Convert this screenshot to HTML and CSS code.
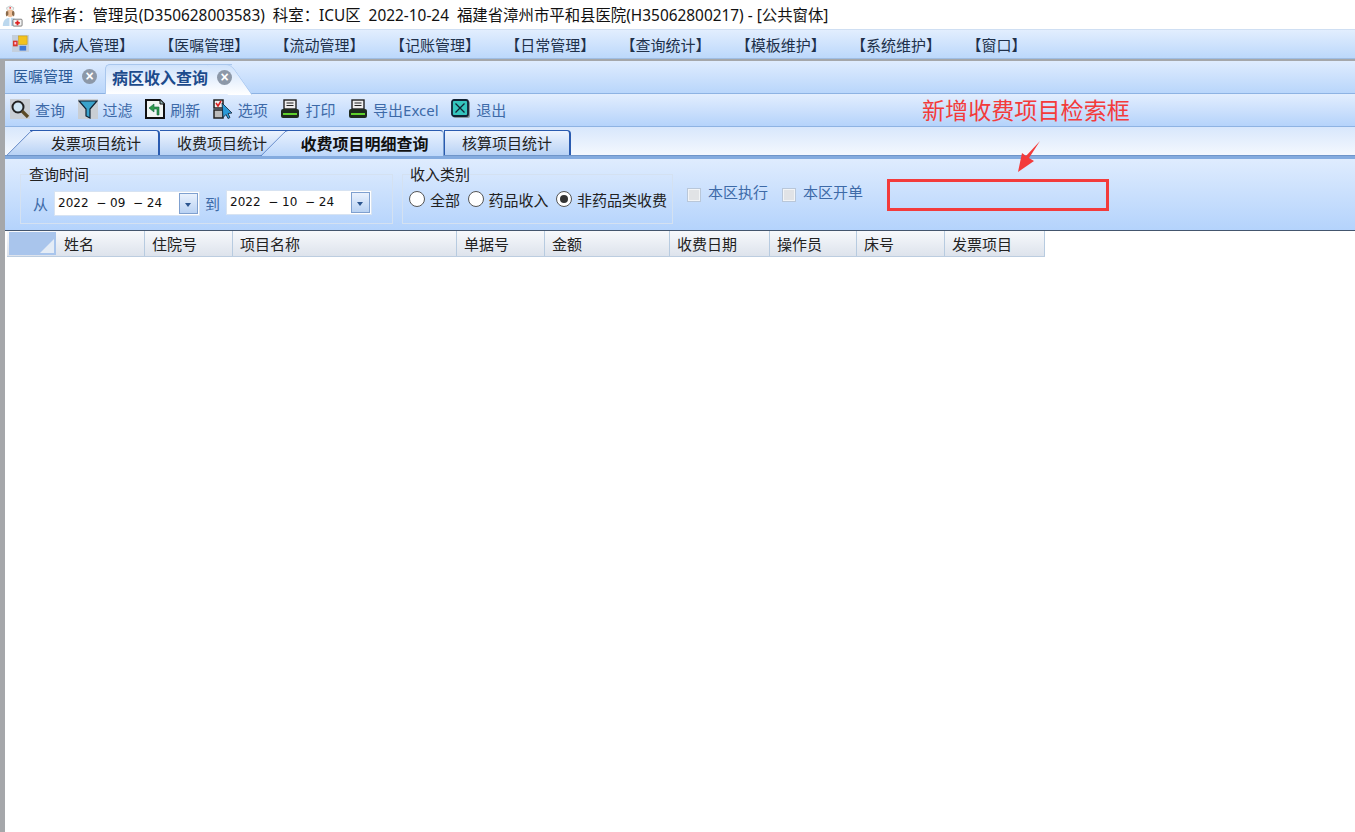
FILE: index.html
```html
<!DOCTYPE html>
<html lang="zh-CN">
<head>
<meta charset="utf-8">
<title>病区收入查询</title>
<link rel="stylesheet" href="styles.css">
</head>
<body>
<div class="app">
  <header class="titlebar">
    <svg class="nurse" viewBox="0 0 24 24" width="22" height="22">
      <path d="M6 3l4-2 4 2-1 3H7z" fill="#f4f4f4" stroke="#9aa" stroke-width=".6"/>
      <path d="M9.300 2.200h1.400v2H9.300z" fill="#e33"/>
      <circle cx="10" cy="9" r="4" fill="#eec09a"/>
      <path d="M6 6.500c-1 2-1 4 0 6l2-2V7zM14 6.500c1 2 1 4 0 6l-2-2V7z" fill="#8a6a4a"/>
      <path d="M2 23c0-6 3-9 8-9s7 2 7 4l-1 5z" fill="#bcd8ee"/>
      <path d="M10 14v9" stroke="#fff" stroke-width="1.500"/>
      <rect x="13" y="15.500" width="10" height="7.500" rx="1" fill="#f3f3f3" stroke="#555" stroke-width=".8"/>
      <path d="M17 17h2v1.500h1.500v2H19V22h-2v-1.500h-1.500v-2H17z" fill="#d22"/>
    </svg>
    <span>操作者：管理员(D350628003583)&nbsp; 科室：ICU区&nbsp; 2022-10-24&nbsp; 福建省漳州市平和县医院(H35062800217) - [公共窗体]</span>
  </header>

  <nav class="menubar">
    <svg class="menu-logo" viewBox="0 0 18 18" width="18" height="18">
      <rect width="18" height="18" fill="#c4cfdd"/>
      <rect x="7" y="1" width="9" height="9" fill="#f3c21f" stroke="#c49a10" stroke-width=".6"/>
      <rect x="1" y="6" width="5" height="6" fill="#d9352b"/>
      <rect x="2.500" y="7.500" width="2" height="2.500" fill="#fbd"/>
      <rect x="8" y="11.500" width="7" height="5" fill="#3f78d6"/>
    </svg>
    <ul class="menu-list">
      <li>【病人管理】</li><li>【医嘱管理】</li><li>【流动管理】</li><li>【记账管理】</li><li>【日常管理】</li><li>【查询统计】</li><li>【模板维护】</li><li>【系统维护】</li><li>【窗口】</li>
    </ul>
  </nav>

  <div class="workspace">
    <div class="doc-tabs">
      <div class="doc-tab">医嘱管理<span class="close">×</span></div>
      <div class="doc-tab doc-tab-active">病区收入查询<span class="close">×</span></div>
    </div>

    <div class="toolbar">
      <button class="tool">
        <svg viewBox="0 0 20 20" width="20" height="20"><rect width="20" height="20" fill="#c9ced4"/><circle cx="8" cy="8" r="5.500" fill="#cfe6f5" stroke="#222" stroke-width="2"/><path d="M12 12l6 6" stroke="#5d4a24" stroke-width="3.200"/></svg>查询</button>
      <button class="tool">
        <svg viewBox="0 0 20 20" width="20" height="20"><rect width="20" height="20" fill="#c9ced4"/><path d="M1 2h18l-7 8v9l-4-2v-7z" fill="#3aa3cc" stroke="#123" stroke-width="1.200"/></svg>过滤</button>
      <button class="tool">
        <svg viewBox="0 0 20 20" width="20" height="20"><path d="M1 1h14l4 4v14H1z" fill="#f1f5f2" stroke="#111" stroke-width="2"/><path d="M15 1v4h4" fill="#9bb" stroke="#111"/><path d="M14 16V8H9V5L4 9l5 4v-3h3v6z" fill="#2f9a4a" stroke="#164" stroke-width=".6"/></svg>刷新</button>
      <button class="tool">
        <svg viewBox="0 0 20 20" width="20" height="20"><rect x="1" y="1" width="9" height="8" fill="#eee" stroke="#222" stroke-width="1.500"/><path d="M3 4l2 3 3-5" stroke="#d22" stroke-width="1.600" fill="none"/><rect x="1" y="11" width="9" height="8" fill="#bbb" stroke="#222" stroke-width="1.500"/><path d="M9 4l10 10-4 .5 2 4-2 1-2-4-3 3z" fill="#2a9ad8" stroke="#123" stroke-width=".8"/></svg>选项</button>
      <button class="tool">
        <svg viewBox="0 0 20 20" width="20" height="20"><rect x="4" y="1" width="12" height="9" fill="#eee" stroke="#222" stroke-width="1.400"/><path d="M6.500 4h7M6.500 6.500h7" stroke="#222"/><rect x="1" y="10" width="18" height="9" rx="2" fill="#1e2b1e"/><path d="M3 15h14" stroke="#5ed12c" stroke-width="2"/></svg>打印</button>
      <button class="tool">
        <svg viewBox="0 0 20 20" width="20" height="20"><rect x="4" y="1" width="12" height="9" fill="#eee" stroke="#222" stroke-width="1.400"/><path d="M6.500 4h7M6.500 6.500h7" stroke="#222"/><rect x="1" y="10" width="18" height="9" rx="2" fill="#1e2b1e"/><path d="M3 15h14" stroke="#5ed12c" stroke-width="2"/></svg>导出Excel</button>
      <button class="tool">
        <svg viewBox="0 0 20 20" width="20" height="20"><rect x="2" y="2" width="17" height="17" rx="2" fill="#8a959e"/><rect x="1" y="1" width="16" height="16" rx="2" fill="#35c4bd" stroke="#123" stroke-width="1.800"/><path d="M4.500 4.500l9 9M13.500 4.500l-9 9" stroke="#123" stroke-width="1.300"/></svg>退出</button>
    </div>

    <div class="sub-tabs">
      <div class="sub-tab sub-tab-slant sub-tab-first">发票项目统计</div>
      <div class="sub-tab sub-tab-second">收费项目统计</div>
      <div class="sub-tab sub-tab-slant sub-tab-active">收费项目明细查询</div>
      <div class="sub-tab sub-tab-last">核算项目统计</div>
    </div>

    <section class="filter">
      <fieldset class="group group-time">
        <legend>查询时间</legend>
        <span class="blue">从</span>
        <div class="date"><span>2022  − 09  − 24</span><i class="drop"></i></div>
        <span class="blue">到</span>
        <div class="date date-up"><span>2022  − 10  − 24</span><i class="drop"></i></div>
      </fieldset>
      <fieldset class="group group-type">
        <legend>收入类别</legend>
        <label class="radio"><i class="dot"></i>全部</label>
        <label class="radio"><i class="dot"></i>药品收入</label>
        <label class="radio"><i class="dot dot-on"></i>非药品类收费</label>
      </fieldset>
      <label class="check"><i class="box"></i>本区执行</label>
      <label class="check"><i class="box"></i>本区开单</label>
    </section>

    <div class="grid-area">
      <div class="grid-head">
        <div class="corner"></div>
        <div class="col">姓名</div><div class="col">住院号</div><div class="col">项目名称</div><div class="col">单据号</div><div class="col">金额</div><div class="col">收费日期</div><div class="col">操作员</div><div class="col">床号</div><div class="col">发票项目</div>
      </div>
    </div>
  </div>

  <div class="note-text">新增收费项目检索框</div>
  <svg class="note-arrow" viewBox="0 0 24 34" width="24" height="34"><path d="M22 1L11 18l5 3L0 32l4-19 4 3z" fill="#f33b3b"/></svg>
  <div class="note-box"></div>
</div>
</body>
</html>
```

FILE: styles.css
```css
* { box-sizing: border-box; }
html, body { margin: 0; height: 100%; background: #fff; }
body { font-family: "Noto Sans", "Noto Sans CJK SC", sans-serif; font-size: 15px; color: #1a1a1a; }
.app { position: relative; width: 1355px; height: 832px; overflow: hidden; display: flex; flex-direction: column; }

.titlebar { height: 29px; display: flex; align-items: center; gap: 8px; padding-left: 1px; background: #fff; font-size: 15.4px; color: #111; white-space: pre; }
.nurse { flex: none; margin-top: 2px; }

.menubar { height: 30px; display: flex; align-items: center; padding-left: 12px; background: linear-gradient(#e2eefe, #bcd8fb); border-top: 1px solid #cfdff3; border-bottom: 1px solid #9fbde2; }
.menu-logo { flex: none; margin-top: -2px; width: 17px; height: 17px; }
.menu-list { list-style: none; display: flex; margin: 0 0 0 15px; padding: 0; gap: 27.300px; color: #20304a; font-size: 15px; }
.menu-list li { width: 88px; white-space: nowrap; }

.workspace { flex: 1; display: flex; flex-direction: column; border-left: 5px solid #a5a7aa; border-top: 2px solid #a5a7aa; background: #fff; min-height: 0; }

.doc-tabs { height: 33px; display: flex; align-items: flex-end; padding-top: 4px; background: linear-gradient(#dfecfe, #b9d6fb); border-bottom: 1px solid #8eb3e3; }
.doc-tab { position: relative; height: 29px; width: 100px; padding: 0 0 6px 8px; display: flex; align-items: center; color: #2b5a96; font-size: 15px; white-space: nowrap; }
.doc-tab-active { width: 127px; margin-bottom: -1px; height: 30px; padding: 0 0 6px 6px; font-size: 16px; font-weight: 700; color: #1c4b8c; background: linear-gradient(#cfe2fb, #fff); border-radius: 5px 0 0 0; border-top: 1px solid #a9c7ee; border-left: 1px solid #a9c7ee; }
.doc-tab-active::after { content: ""; position: absolute; top: -1px; right: -10px; width: 24px; height: 30px; background: linear-gradient(#cfe2fb, #fff); transform: skewX(35deg); border-radius: 0 6px 0 0; border-right: 1px solid #a9c7ee; border-top: 1px solid #a9c7ee; }
.close { position: relative; z-index: 1; flex: none; width: 15px; height: 15px; margin: 2px 0 0 9px; border-radius: 50%; background: #8c98a8; color: #fff; font: 700 14px/15px "Liberation Sans", sans-serif; text-align: center; }

.toolbar { height: 33px; display: flex; align-items: center; gap: 12.600px; padding: 0 0 2px 5px; background: linear-gradient(#e3eefe, #b5d3fb); border-bottom: 1px solid #8eb3e3; }
.tool { display: flex; align-items: center; gap: 5px; padding: 0; border: 0; background: none; font: inherit; font-size: 15px; color: #3d6aa8; white-space: nowrap; }

.sub-tabs { height: 29px; display: flex; align-items: flex-end; padding-left: 5px; background: linear-gradient(#d8e7fc, #f4f8fe); border-bottom: 1px solid #6f95c9; }
.sub-tab { position: relative; height: 25px; padding-bottom: 1px; display: flex; align-items: center; justify-content: center; font-size: 15px; color: #222; white-space: nowrap; background: linear-gradient(#eef4fe, #b8d2f5); border-top: 1px solid #2a5bb0; border-right: 2px solid #2a5bb0; border-radius: 0 4px 0 0; }
.sub-tab-slant::before { content: ""; position: absolute; left: -13px; top: -1px; bottom: 0; width: 27px; background: inherit; border-left: 1px solid #2a5bb0; border-top: 1px solid #2a5bb0; transform: skewX(-45deg); border-radius: 3px 0 0 0; }
.sub-tab-first { width: 130px; margin-left: 20px; padding-left: 4px; z-index: 1; }
.sub-tab-first::before { left: -11px; }
.sub-tab-second { width: 126px; justify-content: flex-start; padding-left: 17px; border-right: 0; border-radius: 0; }
.sub-tab-active { width: 158px; height: 26px; margin-bottom: -1px; padding-left: 0; font-size: 16px; font-weight: 700; color: #111; background: linear-gradient(#e8f1fe, #bdd7fa); border-right: 1px solid #7b9fd0; z-index: 1; }
.sub-tab-last { width: 127px; border-left: 1px solid #2a5bb0; }

.filter { height: 74px; display: flex; align-items: flex-start; padding-left: 15px; background: linear-gradient(#dfecfe, #b4d3fc); border-top: 3px solid #84abdf; }
.group { margin: 0; min-width: 0; padding: 0; border: 1px solid #d4e1f1; height: 59px; display: flex; align-items: center; }
.group legend { padding: 0; font-size: 15px; line-height: 18px; color: #222; }
.group-time { width: 373px; margin-top: 6px; padding-left: 12px; }
.group-time legend { margin-left: -4px; }
.group-type { width: 271px; margin-left: 9px; margin-top: 6px; padding-left: 6px; }
.group-type legend { margin-left: 1px; }
.blue { color: #3d6aa8; font-size: 15px; }
.date { width: 146px; height: 25px; margin-left: 6px; margin-right: 5px; display: flex; align-items: center; justify-content: space-between; padding: 0 1px 0 3px; background: #fff; border: 1px solid #d7e3f2; font: 12px "DejaVu Sans", sans-serif; color: #111; white-space: pre; }
.date-up { margin-top: -2px; margin-left: 6px; }
.drop { position: relative; width: 19px; height: 21px; background: linear-gradient(#e9f1fd, #b9d2f3); border: 1px solid #7fa0cf; }
.drop::after { content: ""; position: absolute; left: 5px; top: 9px; border: 3px solid transparent; border-top: 4px solid #2c558f; border-bottom: 0; }
.radio { display: flex; align-items: center; gap: 5px; margin: -8px 7.500px 0 0; color: #222; font-size: 15px; white-space: nowrap; }
.dot { position: relative; width: 16px; height: 16px; border-radius: 50%; background: #fff; border: 1px solid #555; }
.dot-on::after { content: ""; position: absolute; inset: 3px; border-radius: 50%; background: #333; }
.check { display: flex; align-items: center; gap: 7px; margin: 22px 0 0 14px; color: #3d6aa8; font-size: 15px; white-space: nowrap; }
.box { width: 14px; height: 14px; margin-top: 6px; background: #e1e3e6; border: 1px solid #b9c7d9; box-shadow: inset 0 0 0 1px #f2f4f6; }

.grid-area { flex: 1; padding: 0 0 0 2px; border-top: 1px solid #44566e; background: #fff; }
.grid-head { display: grid; grid-template-columns: 50px 88px 88px 224px 88px 125px 100px 87px 88px 100px; width: 1038px; height: 26px; background: linear-gradient(#f7f9fc, #dde3ec); border-bottom: 1px solid #bccde0; }
.corner { position: relative; background: #a9c5ec; margin: 1px 1px 1px 2px; overflow: hidden; }
.corner::after { content: ""; position: absolute; right: 2px; bottom: 2px; border: 7px solid transparent; border-right-color: #e4ecf6; border-bottom-color: #e4ecf6; }
.col { display: flex; align-items: center; padding-left: 7px; border-right: 1px solid #b7cbe0; font-size: 15px; color: #222; white-space: nowrap; }

.note-text { position: absolute; left: 922px; top: 95px; font-size: 23.100px; line-height: 30px; color: #f33b3b; white-space: nowrap; }
.note-arrow { position: absolute; left: 1018px; top: 140px; }
.note-box { position: absolute; left: 887px; top: 179px; width: 222px; height: 32px; border: 3px solid #f33b3b; }
```
